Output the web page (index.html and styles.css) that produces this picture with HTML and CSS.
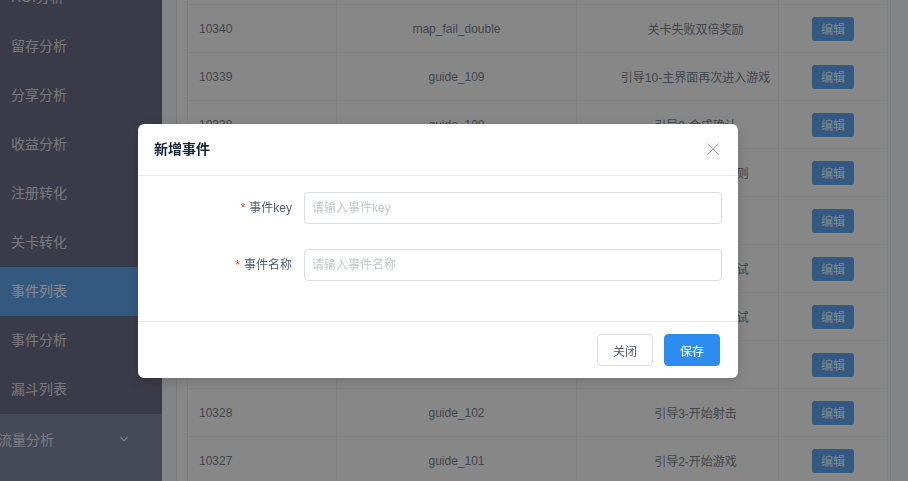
FILE: index.html
```html
<!DOCTYPE html>
<html lang="zh-CN">
<head>
    <meta charset="UTF-8">
    <title>事件列表</title>
    <link rel="stylesheet" href="styles.css">
</head>
<body>
    <div class="layout">
        <!-- 侧边菜单 -->
        <div class="sider">
            <ul class="menu">
                <li class="menu-item">ROI分析</li>
                <li class="menu-item">留存分析</li>
                <li class="menu-item">分享分析</li>
                <li class="menu-item">收益分析</li>
                <li class="menu-item">注册转化</li>
                <li class="menu-item">关卡转化</li>
                <li class="menu-item active">事件列表</li>
                <li class="menu-item">事件分析</li>
                <li class="menu-item">漏斗列表</li>
                <li class="submenu-title">
                    <span>流量分析</span>
                    <svg class="chevron" width="10" height="10" viewBox="0 0 10 10">
                        <path d="M1.5 3.2 L5 6.7 L8.5 3.2" fill="none" stroke="currentColor" stroke-width="1.3"/>
                    </svg>
                </li>
            </ul>
        </div>

        <!-- 内容区 -->
        <div class="content">
            <div class="card">
                <table class="data-table">
                    <colgroup>
                        <col style="width: 149px">
                        <col style="width: 240px">
                        <col style="width: 202px">
                        <col style="width: 109px">
                    </colgroup>
                    <tbody>
                        <tr><td></td><td></td><td class="name"></td><td></td></tr>
                        <tr><td>10340</td><td>map_fail_double</td><td class="name">关卡失败双倍奖励</td><td><button class="btn-edit">编辑</button></td></tr>
                        <tr><td>10339</td><td>guide_109</td><td class="name">引导10-主界面再次进入游戏</td><td><button class="btn-edit">编辑</button></td></tr>
                        <tr><td>10338</td><td>guide_108</td><td class="name">引导9-合成确认</td><td><button class="btn-edit">编辑</button></td></tr>
                        <tr><td>10337</td><td>guide_107</td><td class="name">引导8-新手合成规则</td><td><button class="btn-edit">编辑</button></td></tr>
                        <tr><td>10335</td><td>guide_106</td><td class="name">引导7-合成</td><td><button class="btn-edit">编辑</button></td></tr>
                        <tr><td>10333</td><td>guide_105</td><td class="name">引导6-合成功能测试</td><td><button class="btn-edit">编辑</button></td></tr>
                        <tr><td>10331</td><td>guide_104</td><td class="name">引导5-射击功能测试</td><td><button class="btn-edit">编辑</button></td></tr>
                        <tr><td>10330</td><td>guide_103</td><td class="name">引导4-升级</td><td><button class="btn-edit">编辑</button></td></tr>
                        <tr><td>10328</td><td>guide_102</td><td class="name">引导3-开始射击</td><td><button class="btn-edit">编辑</button></td></tr>
                        <tr><td>10327</td><td>guide_101</td><td class="name">引导2-开始游戏</td><td><button class="btn-edit">编辑</button></td></tr>
                    </tbody>
                </table>
            </div>
        </div>
    </div>

    <!-- 遮罩 + 新增事件弹窗 -->
    <div class="modal-mask"></div>
    <div class="modal-wrap">
        <div class="modal">
            <div class="modal-header">
                <span class="modal-title">新增事件</span>
                <svg class="modal-close" width="14" height="14" viewBox="0 0 14 14">
                    <path d="M1.5 1.5 L12.5 12.5 M12.5 1.5 L1.5 12.5" stroke="currentColor" stroke-width="1" fill="none"/>
                </svg>
            </div>
            <div class="modal-body">
                <div class="form-item">
                    <label class="form-label"><span class="required">*</span>事件key</label>
                    <input type="text" class="form-input" placeholder="请输入事件key">
                </div>
                <div class="form-item">
                    <label class="form-label"><span class="required">*</span>事件名称</label>
                    <input type="text" class="form-input" placeholder="请输入事件名称">
                </div>
            </div>
            <div class="modal-footer">
                <button class="btn">关闭</button>
                <button class="btn btn-primary">保存</button>
            </div>
        </div>
    </div>
</body>
</html>
```

FILE: styles.css
```css
body {
    margin: 0;
    font-family: "Liberation Sans", "Noto Sans CJK SC", sans-serif;
    color: #515a6e;
    overflow: hidden;
}
.layout {
    display: flex;
    height: 100vh;
    overflow: hidden;
}

/* 侧边菜单 */
.sider {
    width: 162px;
    flex-shrink: 0;
    background-color: #5b6886;
    overflow: hidden;
}
.menu {
    list-style: none;
    margin: -27px 0 0 -14px;
    padding: 0;
    font-size: 14px;
    color: rgba(255, 255, 255, 0.82);
}
.menu-item {
    height: 49px;
    line-height: 49px;
    padding-left: 25px;
    background-color: #404262;
    white-space: nowrap;
}
.menu-item.active {
    background-color: #2d8cf0;
    color: #fff;
}
.submenu-title {
    display: flex;
    align-items: center;
    justify-content: space-between;
    height: 49px;
    padding: 0 33px 0 12px;
    white-space: nowrap;
}
.chevron {
    margin-top: 1px;
}

/* 内容区 */
.content {
    flex: 1;
    display: flex;
    background-color: #f5f7f9;
    padding: 0 17px 0 14px;
    overflow: hidden;
}
.card {
    flex: 1;
    background-color: #fff;
    border-left: 1px solid #dcdee2;
    border-right: 1px solid #dcdee2;
    padding: 0 3px 0 10px;
    overflow: hidden;
}
.data-table {
    width: 700px;
    margin-top: -43px;
    table-layout: fixed;
    border-collapse: separate;
    border-spacing: 0;
    border-left: 1px solid #e8eaec;
    font-size: 12px;
}
.data-table td {
    height: 47px;
    padding: 0;
    border-bottom: 1px solid #e8eaec;
    border-right: 1px solid #e8eaec;
    text-align: center;
    white-space: nowrap;
    overflow: hidden;
}
.data-table td:first-child {
    text-align: left;
    padding-left: 11px;
}
.data-table td.name {
    padding-left: 36px;
}
.btn-edit {
    height: 24px;
    padding: 0 9px;
    border: none;
    border-radius: 3px;
    background-color: #2d8cf0;
    color: #fff;
    font-family: inherit;
    font-size: 12px;
}

/* 弹窗 */
.modal-mask {
    position: fixed;
    top: 0;
    left: 0;
    right: 0;
    bottom: 0;
    background-color: rgba(55, 55, 55, 0.6);
}
.modal-wrap {
    position: fixed;
    top: 0;
    left: 0;
    right: 0;
    bottom: 0;
    padding: 124px 0 0 138px;
}
.modal {
    width: 600px;
    background-color: #fff;
    border-radius: 6px;
    box-shadow: 0 4px 12px rgba(0, 0, 0, 0.15);
}
.modal-header {
    display: flex;
    align-items: center;
    justify-content: space-between;
    padding: 14px 18px 15px 16px;
    line-height: 22px;
    border-bottom: 1px solid #e8eaec;
}
.modal-title {
    font-size: 14px;
    font-weight: bold;
    color: #17233d;
}
.modal-close {
    color: #aaa;
}
.modal-body {
    padding: 16px;
}
.form-item {
    display: flex;
    margin-bottom: 24px;
}
.form-item:first-child {
    margin-bottom: 25px;
}
.form-label {
    width: 150px;
    box-sizing: border-box;
    padding-right: 12px;
    text-align: right;
    line-height: 32px;
    font-size: 12px;
    color: #515a6e;
}
.required {
    color: #ed4014;
    margin-right: 4px;
    font-size: 12px;
}
.form-input {
    flex: 1;
    height: 32px;
    box-sizing: border-box;
    padding: 4px 7px;
    border: 1px solid #dcdee2;
    border-radius: 4px;
    font-family: inherit;
    font-size: 12px;
    color: #515a6e;
    outline: none;
}
.form-input::placeholder {
    color: #c5c8ce;
}
.modal-footer {
    display: flex;
    justify-content: flex-end;
    gap: 11px;
    padding: 12px 18px;
    border-top: 1px solid #e8eaec;
}
.btn {
    width: 56px;
    height: 32px;
    border: 1px solid #dcdee2;
    border-radius: 4px;
    background-color: #fff;
    color: #515a6e;
    font-family: inherit;
    font-size: 12px;
}
.btn-primary {
    background-color: #2d8cf0;
    border-color: #2d8cf0;
    color: #fff;
}
```
